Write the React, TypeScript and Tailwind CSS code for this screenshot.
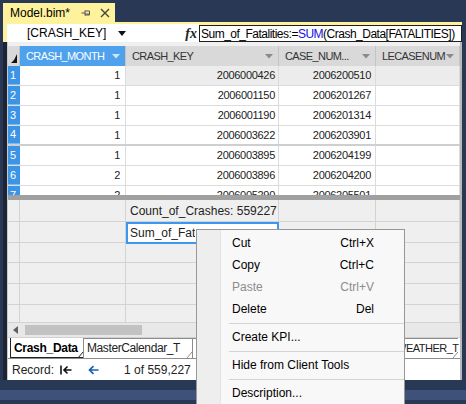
import React from 'react';

// Tabular model grid with a context menu on a measure cell

const cols = 'grid grid-cols-[12px_106px_153px_97px_84px]';

const rows = [
  { n: 1, m: '1', key: '2006000426', cas: '2006200510' },
  { n: 2, m: '1', key: '2006001150', cas: '2006201267' },
  { n: 3, m: '1', key: '2006001190', cas: '2006201314' },
  { n: 4, m: '1', key: '2006003622', cas: '2006203901' },
  { n: 5, m: '1', key: '2006003895', cas: '2006204199' },
  { n: 6, m: '2', key: '2006003896', cas: '2006204200' },
  { n: 7, m: '2', key: '2006005290', cas: '2006205501' },
];

function Caret({ light }: { light?: boolean }) {
  return (
    <svg width="8" height="5" viewBox="0 0 8 5" className="shrink-0">
      <path d="M0 0 H8 L4 4.5 Z" fill={light ? '#cfe6fb' : '#8a8a8a'} />
    </svg>
  );
}

function HeaderCell({ label, active }: { label: string; active?: boolean }) {
  return (
    <div
      className={
        'flex items-center justify-between pl-[6px] pr-[5px] border-r border-[#c4c4c4] tracking-[-0.6px] ' +
        (active ? 'bg-[#4ea1ec] text-white' : 'bg-[#d9d9d9] text-[#333]')
      }
    >
      <span className="whitespace-nowrap">{label}</span>
      <Caret light={active} />
    </div>
  );
}

function DataRow({ r }: { r: (typeof rows)[number] }) {
  const first = r.n === 1;
  return (
    <div className={cols + ' h-[20px] ' + (r.n === 4 ? 'border-b-2 border-[#cfcfcf]' : 'border-b border-[#dcdcdc]')}>
      <div className="bg-[#3c94e6] text-white pl-[2px] flex items-center border-b border-[#7db8ef]">{r.n}</div>
      <div className="bg-white flex items-center justify-end pr-[5px] border-r border-[#dcdcdc]">{r.m}</div>
      <div className={(first ? 'bg-[#ececec]' : 'bg-white') + ' flex items-center justify-end pr-[3px] border-r border-[#dcdcdc]'}>{r.key}</div>
      <div className={(first ? 'bg-[#ececec]' : 'bg-white') + ' flex items-center justify-end pr-[4px] border-r border-[#dcdcdc]'}>{r.cas}</div>
      <div className={(first ? 'bg-[#ececec]' : 'bg-white') + ' border-r border-[#dcdcdc]'} />
    </div>
  );
}

function MeasureRow({ h, children }: { h: string; children?: React.ReactNode }) {
  return (
    <div className={cols + ' ' + h + ' border-b border-[#d3d3d3] bg-[#efefef]'}>
      <div className="border-r border-[#d3d3d3]" />
      <div className="border-r border-[#d3d3d3]" />
      <div className="border-r border-[#d3d3d3] flex items-center min-w-0">{children}</div>
      <div className="border-r border-[#d3d3d3]" />
      <div className="border-r border-[#d3d3d3]" />
    </div>
  );
}

function SheetTab({ label, w, bold, small }: { label: string; w: string; bold?: boolean; small?: boolean }) {
  const txt = bold
    ? 'text-[12px] font-bold text-black'
    : small
      ? 'text-[11px] tracking-[-0.5px] text-[#222]'
      : 'text-[12px] tracking-[-0.4px] text-[#222]';
  return (
    <div className={'relative h-full flex items-center pl-[4px] shrink-0 ' + w}>
      <div
        className={
          'absolute inset-0 border-l ' +
          (bold ? 'border-[#222] border-b bg-white' : 'border-[#8c8c8c] border-t bg-white')
        }
      />
      <svg className="absolute right-0 bottom-0" width="5" height="6" viewBox="0 0 5 6">
        <path d="M0 6 L5 0" stroke={bold ? '#222' : '#8c8c8c'} strokeWidth="1" />
      </svg>
      <span className={'relative whitespace-nowrap ' + txt}>{label}</span>
    </div>
  );
}

function MenuItem({ label, keys, disabled }: { label: string; keys?: string; disabled?: boolean }) {
  return (
    <div className={'h-[22px] flex items-center pl-[35px] pr-[30px] justify-between ' + (disabled ? 'text-[#8d8d8d]' : 'text-black')}>
      <span>{label}</span>
      {keys && <span>{keys}</span>}
    </div>
  );
}

function Sep() {
  return (
    <div className="h-[6px] flex items-center pl-[32px]">
      <div className="w-full h-px bg-[#d5d5d5]" />
    </div>
  );
}

export default function App() {
  return (
    <div className="relative w-[466px] h-[404px] overflow-hidden bg-[#293955] font-['Liberation_Sans',Arial,sans-serif] text-[11px] tracking-[-0.3px] text-[#222]">
      {/* document tab */}
      <div className="h-[22px] pl-[3px] pt-[3px] flex">
        <div className="w-[112px] bg-[#fff29d] flex items-center pl-[7px] text-[12px] tracking-normal text-black">
          <span>Model.bim*</span>
          <svg className="ml-[11px]" width="10" height="10" viewBox="0 0 10 10">
            <path d="M0.5 5 H4 M4 2.5 V7.5 M4 3 H8.5 V7 H4 M4 6 H8.5" stroke="#555" strokeWidth="1" fill="none" />
          </svg>
          <svg className="ml-[9px]" width="10" height="10" viewBox="0 0 10 10">
            <path d="M1 1 L9 9 M9 1 L1 9" stroke="#444" strokeWidth="1.4" />
          </svg>
        </div>
      </div>

      <div className="ml-[3px] w-[459px]">
        <div className="h-[2px] bg-[#fff29d]" />
        {/* formula bar */}
        <div className="h-[18px] flex bg-[#fff29d] pl-[4px]">
          <div className="w-[192px] bg-white flex items-center text-[12px] tracking-normal">
            <span className="ml-[20px] w-[91px] text-black">[CRASH_KEY]</span>
            <svg width="8" height="5" viewBox="0 0 8 5">
              <path d="M0 0 H8 L4 5 Z" fill="#111" />
            </svg>
            <span className="ml-auto mr-[2px] font-['Liberation_Serif',serif] italic font-bold text-[14px] text-[#222]">fx</span>
          </div>
          <div className="flex-1 mt-[1px] bg-white border border-[#1f1f1f] flex items-center pl-[1px] text-[12px] tracking-[-0.5px] text-black">
            <span className="whitespace-nowrap">
              Sum_of_Fatalities:=<span className="text-[#1010e0]">SUM</span>(Crash_Data[FATALITIES])
            </span>
          </div>
        </div>

        {/* grid body */}
        <div className="border-l-[4px] border-[#1c2536] bg-[#f0f0f0]">
          <div className="border-l border-[#c9c9c9] border-r-2 border-r-[#b9b9b9]">
            <div className="h-[4px] bg-[#f0f0f0]" />
            <div className={cols + ' h-[20px]'}>
              <div className="bg-[#d9d9d9] flex items-end pl-[3px] pb-[3px] border-r border-[#c4c4c4]">
                <svg width="6" height="9" viewBox="0 0 6 9">
                  <path d="M6 0 V9 H0 L3 6 Z" fill="#111" />
                </svg>
              </div>
              <HeaderCell label="CRASH_MONTH" active />
              <HeaderCell label="CRASH_KEY" />
              <HeaderCell label="CASE_NUM..." />
              <HeaderCell label="LECASENUM" />
            </div>
            {rows.slice(0, 6).map(r => (
              <DataRow key={r.n} r={r} />
            ))}
            <div className="h-[9px] overflow-hidden">
              <DataRow r={rows[6]} />
            </div>
            <div className="h-[5px] bg-[#a0a0a0]" />

            {/* measure grid */}
            <MeasureRow h="h-[22px]">
              <span className="pl-[4px] text-[12px] tracking-normal">Count_of_Crashes: 559227</span>
            </MeasureRow>
            <div className={cols + ' h-[21px] border-b border-[#d3d3d3] bg-[#efefef]'}>
              <div className="border-r border-[#d3d3d3]" />
              <div className="border-r border-[#d3d3d3]" />
              <div className="border-[2px] border-[#3b98f0] bg-white flex items-center">
                <div className="w-[67px] overflow-hidden">
                  <span className="pl-[2px] text-[12px] tracking-normal whitespace-nowrap">Sum_of_Fatalities</span>
                </div>
              </div>
              <div className="border-r border-[#d3d3d3]" />
              <div className="border-r border-[#d3d3d3]" />
            </div>
            <MeasureRow h="h-[20px]" />
            <MeasureRow h="h-[21px]" />
            <MeasureRow h="h-[21px]" />
            <MeasureRow h="h-[18px]" />

            {/* horizontal scrollbar */}
            <div className="h-[14px] bg-[#e8e8e8] flex items-center">
              <svg className="ml-[5px]" width="5" height="8" viewBox="0 0 5 8">
                <path d="M5 0 V8 L0 4 Z" fill="#606060" />
              </svg>
              <div className="ml-[7px] w-[117px] h-[10px] bg-[#c2c2c2]" />
            </div>

            {/* sheet tabs */}
            <div className="h-[21px] bg-white flex pl-[2px] border-t border-[#d0d0d0] overflow-hidden">
              <SheetTab label="Crash_Data" w="w-[73px]" bold />
              <SheetTab label="MasterCalendar_T" w="w-[109px]" />
              <SheetTab label="Person_Data" w="w-[100px]" />
              <SheetTab label="Vehicle_Data" w="w-[100px]" />
              <SheetTab label="WEATHER_T" w="w-[66px]" small />
            </div>

            {/* record bar */}
            <div className="h-[22px] bg-white flex items-center border-t border-[#8c8c8c] text-[12px] tracking-normal">
              <span className="ml-[4px]">Record:</span>
              <svg className="ml-[6px]" width="12" height="10" viewBox="0 0 12 10">
                <path d="M1 0.5 V9.5" stroke="#111" strokeWidth="1.6" />
                <path d="M11.5 5 H4.5 M7.5 1.5 L4 5 L7.5 8.5" stroke="#111" strokeWidth="1.6" fill="none" />
              </svg>
              <svg className="ml-[16px]" width="11" height="10" viewBox="0 0 11 10">
                <path d="M10.5 5 H2 M5.5 1.2 L1.5 5 L5.5 8.8" stroke="#1a5fb4" strokeWidth="1.7" fill="none" />
              </svg>
              <span className="ml-[25px]">1 of 559,227</span>
            </div>
          </div>
        </div>
      </div>

      <div className="mt-[10px] h-[10px] bg-[#3e5279]" />

      {/* context menu */}
      <div className="absolute left-[196px] top-[229px] w-[209px] h-[185px] border border-[#979797] bg-[#f8f8f8] text-[12px] tracking-normal">
        <div className="absolute left-0 top-0 bottom-0 w-[24px] bg-[#eeeeee] border-r border-[#e4e4e4]" />
        <div className="relative pt-[2px]">
          <MenuItem label="Cut" keys="Ctrl+X" />
          <MenuItem label="Copy" keys="Ctrl+C" />
          <MenuItem label="Paste" keys="Ctrl+V" disabled />
          <MenuItem label="Delete" keys="Del" />
          <Sep />
          <MenuItem label="Create KPI..." />
          <Sep />
          <MenuItem label="Hide from Client Tools" />
          <Sep />
          <MenuItem label="Description..." />
        </div>
      </div>
    </div>
  );
}
